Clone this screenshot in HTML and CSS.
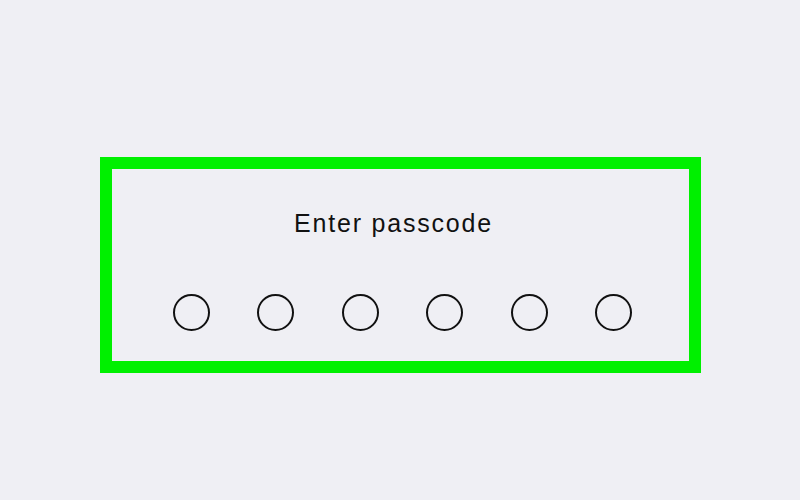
FILE: index.html
```html
<!DOCTYPE html>
<html lang="en">

<head>
  <meta charset="UTF-8">
  <meta name="viewport" content="width=device-width, initial-scale=1.0">
  <title>Enter passcode</title>
  <link rel="stylesheet" href="styles.css">
</head>

<body>
  <div class="passcode-box">
    <div class="passcode-title">Enter passcode</div>
    <div class="dots">
      <span class="dot"></span>
      <span class="dot"></span>
      <span class="dot"></span>
      <span class="dot"></span>
      <span class="dot"></span>
      <span class="dot"></span>
    </div>
  </div>
</body>

</html>
```

FILE: styles.css
```css
body {
  margin: 0;
  background: #efeff4;
  font-family: "Liberation Sans", Arial, sans-serif;
  height: 500px;
  overflow: hidden;
}

.passcode-box {
  box-sizing: border-box;
  width: 601px;
  height: 216px;
  margin: 157px 0 0 100px;
  border: 12px solid #00f000;
  padding-top: 40px;
}

.passcode-title {
  text-align: center;
  font-size: 25px;
  line-height: 28px;
  letter-spacing: 1.8px;
  color: #111;
  padding-right: 14px;
}

.dots {
  display: flex;
  justify-content: center;
  gap: 47.6px;
  margin-top: 57px;
  padding-left: 4px;
}

.dot {
  box-sizing: border-box;
  width: 37px;
  height: 37px;
  border: 2.5px solid #111;
  border-radius: 50%;
}
```
